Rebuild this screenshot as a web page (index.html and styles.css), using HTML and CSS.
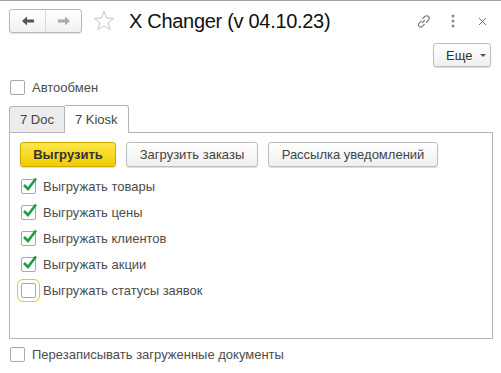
FILE: index.html
```html
<!DOCTYPE html>
<html lang="ru">
<head>
<meta charset="utf-8">
<link rel="stylesheet" href="styles.css">
</head>
<body>
<div class="window">
  <div class="header">
    <div class="nav">
      <div class="nav-btn">
        <svg width="12" height="10" viewBox="0 0 12 10"><path d="M0 5 L5 0.5 L5 3.5 L12 3.5 L12 6.5 L5 6.5 L5 9.5 Z" fill="#555"/></svg>
      </div>
      <div class="nav-sep"></div>
      <div class="nav-btn">
        <svg width="12" height="10" viewBox="0 0 12 10"><path d="M12 5 L7 0.5 L7 3.5 L0 3.5 L0 6.5 L7 6.5 L7 9.5 Z" fill="#aaa"/></svg>
      </div>
    </div>
    <svg class="star" width="22" height="22" viewBox="0 0 22 22"><path d="M11 1.5 L13.6 8 L20.5 8.4 L15.2 12.8 L17 19.6 L11 15.8 L5 19.6 L6.8 12.8 L1.5 8.4 L8.4 8 Z" fill="none" stroke="#c4c4c4" stroke-width="1" stroke-linejoin="round"/></svg>
    <div class="title">X Changer (v 04.10.23)</div>
    <div class="spacer"></div>
    <svg class="hicon link" width="15" height="15" viewBox="0 0 15 15"><g fill="none" stroke="#7a7a7a" stroke-width="1.2" stroke-linecap="round"><path d="M6.5 8.5 L8.5 6.5"/><path d="M5.2 7.2 L3 9.4 A2.2 2.2 0 0 0 6.1 12.5 L8.3 10.3"/><path d="M6.7 4.7 L8.9 2.5 A2.2 2.2 0 0 1 12.5 6.1 L10.3 8.3"/></g></svg>
    <svg class="hicon kebab" width="4" height="14" viewBox="0 0 4 14"><g fill="#8a8a8a"><circle cx="2" cy="2" r="1.5"/><circle cx="2" cy="7" r="1.5"/><circle cx="2" cy="12" r="1.5"/></g></svg>
    <svg class="hicon close" width="9" height="9" viewBox="0 0 9 9"><path d="M1 1 L8 8 M8 1 L1 8" stroke="#707070" stroke-width="1"/></svg>
  </div>
  <div class="toolbar">
    <div class="btn more">Еще <span class="caret"></span></div>
  </div>
  <label class="check top-check"><span class="box"></span><span>Автообмен</span></label>
  <div class="tabs">
    <div class="tab">7 Doc</div>
    <div class="tab active">7 Kiosk</div>
  </div>
  <div class="panel">
    <div class="buttons">
      <div class="btn primary">Выгрузить</div>
      <div class="btn">Загрузить заказы</div>
      <div class="btn">Рассылка уведомлений</div>
    </div>
    <div class="checks">
      <label class="check"><span class="box"><svg class="tick" width="16" height="15" viewBox="0 0 16 15"><path d="M2 8 L6 12 L14 1.5" fill="none" stroke="#1e9c3e" stroke-width="2.6"/></svg></span><span>Выгружать товары</span></label>
      <label class="check"><span class="box"><svg class="tick" width="16" height="15" viewBox="0 0 16 15"><path d="M2 8 L6 12 L14 1.5" fill="none" stroke="#1e9c3e" stroke-width="2.6"/></svg></span><span>Выгружать цены</span></label>
      <label class="check"><span class="box"><svg class="tick" width="16" height="15" viewBox="0 0 16 15"><path d="M2 8 L6 12 L14 1.5" fill="none" stroke="#1e9c3e" stroke-width="2.6"/></svg></span><span>Выгружать клиентов</span></label>
      <label class="check"><span class="box"><svg class="tick" width="16" height="15" viewBox="0 0 16 15"><path d="M2 8 L6 12 L14 1.5" fill="none" stroke="#1e9c3e" stroke-width="2.6"/></svg></span><span>Выгружать акции</span></label>
      <label class="check focused"><span class="box"></span><span>Выгружать статусы заявок</span></label>
    </div>
  </div>
  <label class="check bottom-check"><span class="box"></span><span>Перезаписывать загруженные документы</span></label>
</div>
</body>
</html>
```

FILE: styles.css
```css
html, body {
  margin: 0;
  padding: 0;
  background: #fff;
}
body {
  font-family: "Liberation Sans", Arial, sans-serif;
  font-size: 13px;
  color: #4d4d4d;
  width: 501px;
  height: 373px;
  overflow: hidden;
}
.window {
  border-top: 1px solid #a6a6a6;
  height: 372px;
}
.header {
  display: flex;
  align-items: center;
  height: 24px;
  margin-top: 8px;
  padding-left: 9px;
  padding-right: 14px;
}
.nav {
  display: flex;
  align-items: stretch;
  width: 71px;
  height: 22px;
  border: 1px solid #b8b8b8;
  border-radius: 3px;
  background: linear-gradient(#ffffff, #f1f1f1);
  box-shadow: 0 1px 1px rgba(0,0,0,0.12);
}
.nav-btn {
  flex: 1;
  display: flex;
  align-items: center;
  justify-content: center;
}
.nav-sep {
  width: 1px;
  background: #d8d8d8;
}
.star {
  margin-left: 11px;
}
.title {
  margin-left: 14px;
  font-size: 20px;
  letter-spacing: -0.3px;
  color: #111;
}
.spacer {
  flex: 1;
}
.link {
  margin-right: 20px;
}
.kebab {
  margin-right: 23px;
}
.toolbar {
  display: flex;
  justify-content: flex-end;
  padding-right: 10px;
  margin-top: 10px;
}
.btn {
  box-sizing: border-box;
  height: 25px;
  padding: 0 12px;
  display: flex;
  align-items: center;
  border: 1px solid #bdbdbd;
  border-radius: 3px;
  background: linear-gradient(#ffffff, #efefef);
  box-shadow: 0 1px 1px rgba(0,0,0,0.15);
  color: #444;
  font-size: 13px;
}
.more {
  width: 58px;
  height: 24px;
  padding: 0 0 0 12px;
  color: #333;
}
.caret {
  margin-left: 8px;
  width: 0;
  height: 0;
  border-left: 3px solid transparent;
  border-right: 3px solid transparent;
  border-top: 3px solid #555;
}
.check {
  display: flex;
  align-items: center;
  height: 16px;
}
.box {
  position: relative;
  box-sizing: border-box;
  width: 15px;
  height: 15px;
  border: 1px solid #a9a9a9;
  border-radius: 2px;
  background: #fff;
  margin-right: 7px;
}
.tick {
  position: absolute;
  left: 0;
  top: -3px;
}
.top-check {
  margin-top: 12px;
  padding-left: 10px;
}
.tabs {
  display: flex;
  align-items: flex-end;
  margin-top: 10px;
  padding-left: 9px;
  height: 27px;
}
.tab {
  box-sizing: border-box;
  height: 26px;
  padding: 0 10px;
  display: flex;
  align-items: center;
  border: 1px solid #b5b5b5;
  border-bottom: none;
  background: #ececec;
  color: #444;
  font-size: 13px;
}
.tab.active {
  height: 28px;
  margin-bottom: -1px;
  background: #fff;
  border-left: none;
  border-radius: 0 3px 0 0;
  position: relative;
  z-index: 1;
}
.tab:first-child {
  border-radius: 3px 0 0 0;
}
.panel {
  box-sizing: border-box;
  margin-left: 9px;
  width: 484px;
  height: 207px;
  border: 1px solid #b5b5b5;
  padding: 9px 10px;
}
.buttons {
  display: flex;
  gap: 10px;
}
.btn.primary {
  width: 96px;
  justify-content: center;
  border-color: #c9a900;
  background: linear-gradient(#fde64b, #f2cb00);
  font-weight: bold;
  color: #333;
}
.buttons .btn:nth-child(2) {
  width: 132px;
  justify-content: center;
}
.buttons .btn:nth-child(3) {
  width: 170px;
  justify-content: center;
}
.checks {
  display: flex;
  flex-direction: column;
  gap: 10px;
  margin-top: 11px;
}
.checks .check {
  padding-left: 1px;
}
.focused .box {
  outline: 1px solid #f4c800;
  outline-offset: 3px;
}
.bottom-check {
  margin-top: 7px;
  padding-left: 10px;
}
```
